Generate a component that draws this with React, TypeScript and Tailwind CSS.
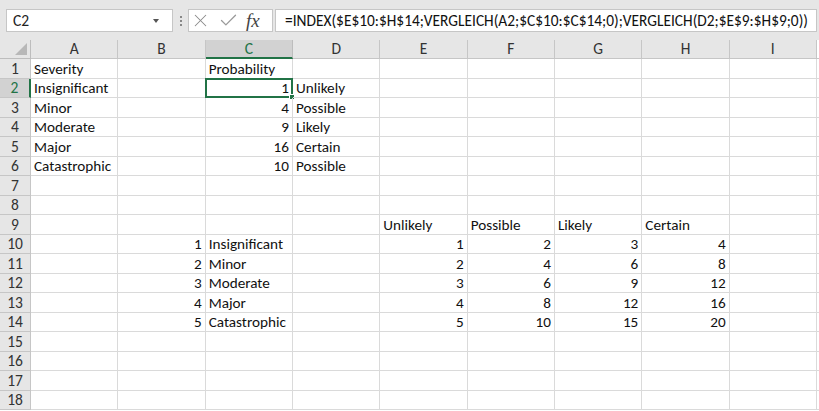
import React from 'react';
import { X, Check } from 'lucide-react';

type Cell = { v: string; right?: boolean };

const COLS = ['A', 'B', 'C', 'D', 'E', 'F', 'G', 'H', 'I'];

// Inhalt der Tabelle: Zeile -> Spalte -> Wert
const DATA: Record<number, Record<string, Cell>> = {
    1: { A: { v: 'Severity' }, C: { v: 'Probability' } },
    2: { A: { v: 'Insignificant' }, C: { v: '1', right: true }, D: { v: 'Unlikely' } },
    3: { A: { v: 'Minor' }, C: { v: '4', right: true }, D: { v: 'Possible' } },
    4: { A: { v: 'Moderate' }, C: { v: '9', right: true }, D: { v: 'Likely' } },
    5: { A: { v: 'Major' }, C: { v: '16', right: true }, D: { v: 'Certain' } },
    6: { A: { v: 'Catastrophic' }, C: { v: '10', right: true }, D: { v: 'Possible' } },
    9: { E: { v: 'Unlikely' }, F: { v: 'Possible' }, G: { v: 'Likely' }, H: { v: 'Certain' } },
};

const severities = ['Insignificant', 'Minor', 'Moderate', 'Major', 'Catastrophic'];
severities.forEach((s, i) => {
    const n = i + 1;
    DATA[9 + n] = {
        B: { v: String(n), right: true },
        C: { v: s },
        E: { v: String(n * 1), right: true },
        F: { v: String(n * 2), right: true },
        G: { v: String(n * 3), right: true },
        H: { v: String(n * 4), right: true },
    };
});

const FONT = { fontFamily: 'Carlito, Lato, "Liberation Sans", sans-serif' };

function FormulaBar() {
    return (
        <div className="h-[40px] bg-[#e6e6e6] flex items-start pt-[9px]">
            {/* Namensfeld */}
            <div className="ml-[6px] w-[167px] h-[23px] bg-white border border-[#c6c6c6] flex items-center justify-between pl-[6px] pr-[13px]">
                <span className="text-[15.5px] text-[#222] leading-none">C2</span>
                <span className="w-0 h-0 border-l-[3.5px] border-r-[3.5px] border-t-[4px] border-l-transparent border-r-transparent border-t-[#555]" />
            </div>
            <div className="w-[15px] h-[23px] flex flex-col items-center justify-center gap-[2px]">
                <span className="w-[2px] h-[2px] bg-[#888]" />
                <span className="w-[2px] h-[2px] bg-[#888]" />
                <span className="w-[2px] h-[2px] bg-[#888]" />
            </div>
            {/* Abbrechen / Eingabe / Funktion */}
            <div className="w-[85px] h-[23px] bg-white border border-[#c6c6c6] flex items-center pl-[1px] gap-[7px]">
                <X size={21} strokeWidth={1.2} className="text-[#8a8a8a]" />
                <Check size={21} strokeWidth={1.5} className="text-[#9a9a9a]" />
                <span className="text-[19px] italic text-[#444] leading-none" style={{ fontFamily: '"Liberation Serif", serif' }}>
                    fx
                </span>
            </div>
            <div className="ml-[2px] w-[542px] h-[23px] bg-white border border-[#c6c6c6] flex items-center pl-[9px]">
                <span className="text-[15.4px] text-[#111] whitespace-nowrap leading-none">
                    =INDEX($E$10:$H$14;VERGLEICH(A2;$C$10:$C$14;0);VERGLEICH(D2;$E$9:$H$9;0))
                </span>
            </div>
        </div>
    );
}

function App() {
    const rows = Array.from({ length: 18 }, (_, i) => i + 1);

    return (
        <div className="w-[819px] h-[411px] overflow-hidden bg-white text-[#111]" style={FONT}>
            <FormulaBar />

            <div className="grid grid-cols-[31px_repeat(9,87.33px)_1fr] grid-rows-[19px_repeat(18,19.5px)]">
                {/* Ecke */}
                <div className="bg-[#e6e6e6] border-r border-b border-[#bdbdbd] flex items-end justify-end pr-[3px] pb-[3px]">
                    <svg width="12" height="12" viewBox="0 0 12 12">
                        <polygon points="12,0 12,12 0,12" fill="#b8b8b8" />
                    </svg>
                </div>
                {COLS.map((c) => (
                    <div
                        key={c}
                        className={
                            c === 'C'
                                ? 'bg-[#d2d2d2] border-r border-[#bdbdbd] border-b-2 border-b-[#217346] text-[#217346] flex items-center justify-center text-[15.5px]'
                                : 'bg-[#e6e6e6] border-r border-b border-[#c6c6c6] text-[#333] flex items-center justify-center text-[15.5px]'
                        }
                    >
                        {c}
                    </div>
                ))}
                <div className="bg-white border-b border-[#c6c6c6]" />

                {rows.map((r) => (
                    <React.Fragment key={r}>
                        <div
                            className={
                                r === 2
                                    ? 'bg-[#d2d2d2] border-r-2 border-r-[#217346] border-b border-[#c6c6c6] text-[#217346] flex items-center justify-center text-[15.5px]'
                                    : 'bg-[#e6e6e6] border-r border-b border-[#c6c6c6] text-[#333] flex items-center justify-center text-[15.5px]'
                            }
                        >
                            {r}
                        </div>
                        {COLS.map((c) => {
                            const cell = DATA[r]?.[c];
                            const selected = r === 2 && c === 'C';
                            return (
                                <div
                                    key={c}
                                    className={`relative border-r border-b border-[#dadada] flex items-end px-[3px] text-[15.2px] leading-[17px] whitespace-nowrap ${
                                        cell?.right ? 'justify-end' : 'justify-start'
                                    }`}
                                >
                                    {cell?.v}
                                    {selected && (
                                        <div className="absolute -left-[1px] -top-[1px] -right-[1px] -bottom-[1px] border-2 border-[#217346]">
                                            <div className="absolute -right-[4px] -bottom-[4px] w-[6px] h-[6px] bg-[#217346] border border-white" />
                                        </div>
                                    )}
                                </div>
                            );
                        })}
                        <div className="border-b border-[#dadada]" />
                    </React.Fragment>
                ))}
            </div>
        </div>
    );
}

export default App;
